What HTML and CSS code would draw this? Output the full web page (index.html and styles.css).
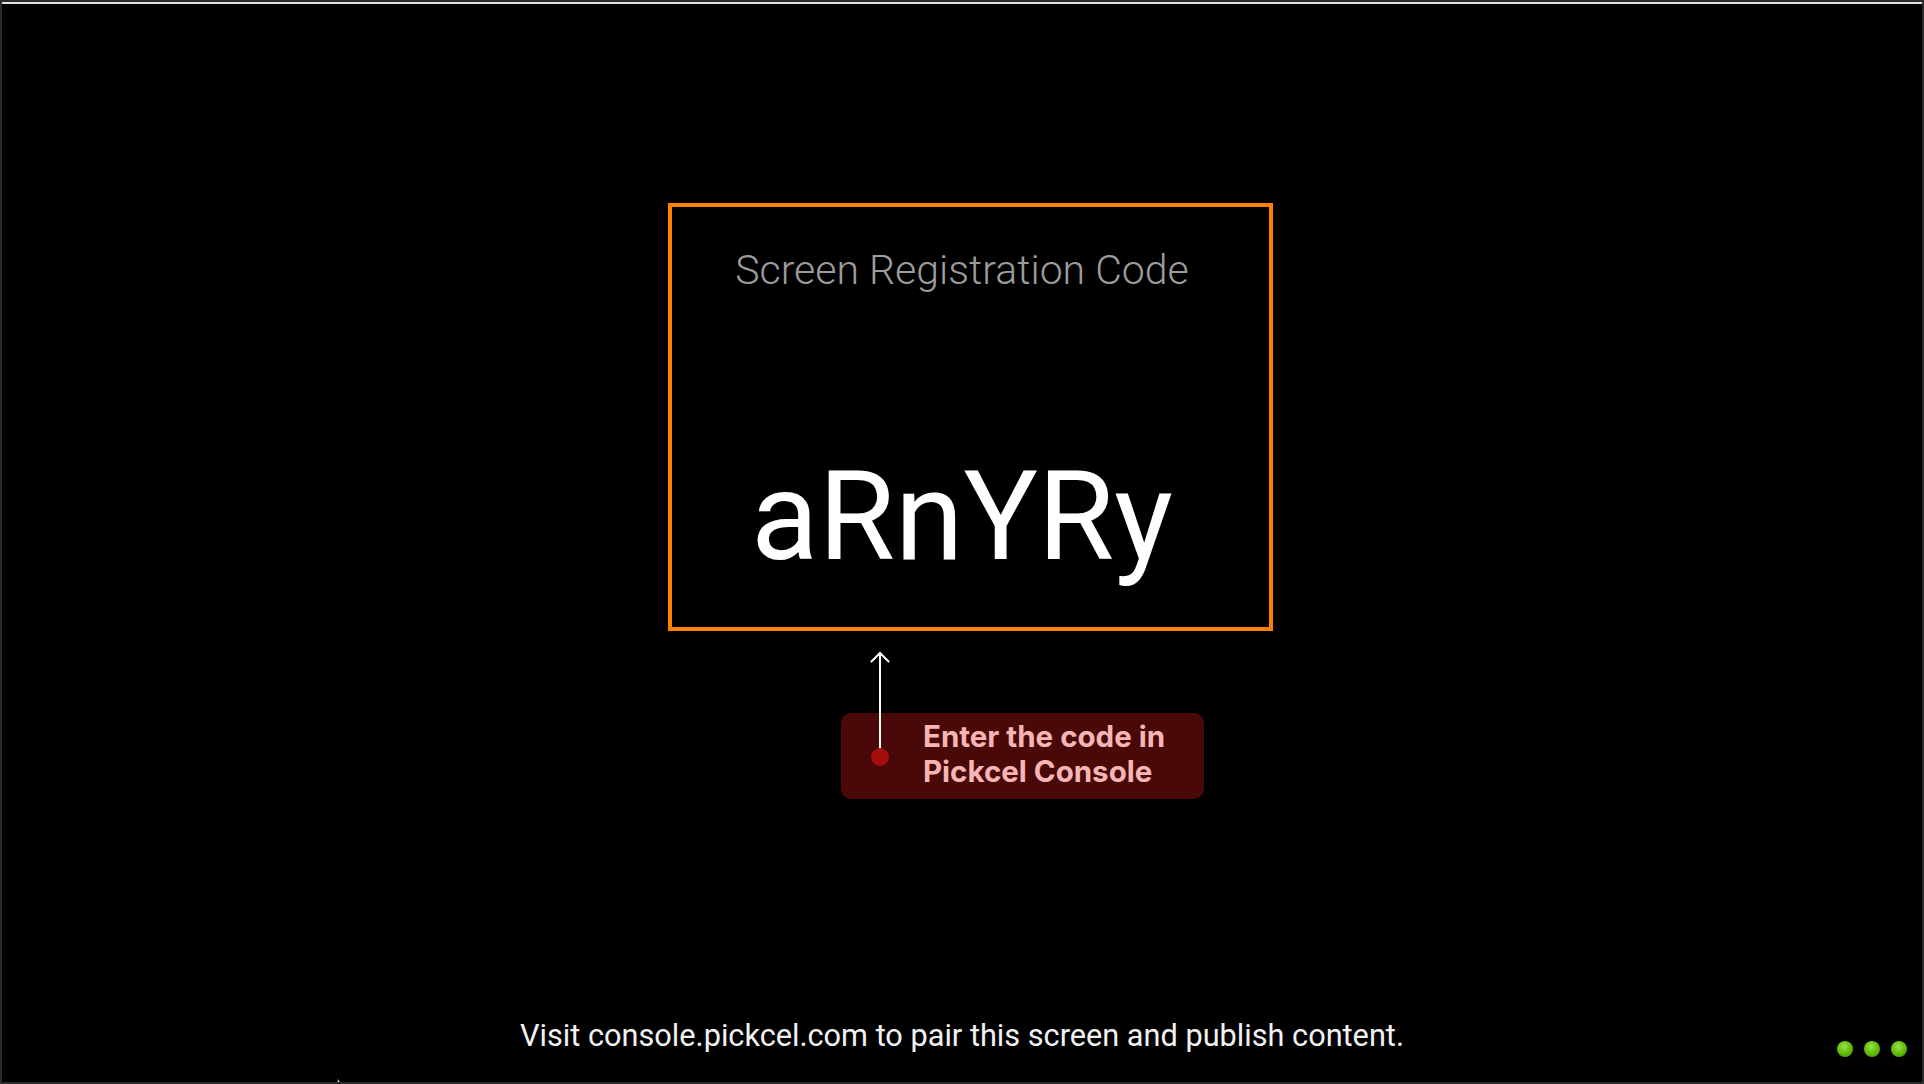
FILE: index.html
```html
<!DOCTYPE html>
<html lang="en">
<head>
<meta charset="utf-8">
<title>Screen Registration</title>
<link rel="stylesheet" href="styles.css">
</head>
<body>
<div class="screen">
  <div class="code-box">
    <div class="code-title">Screen Registration Code</div>
    <div class="code-value">aRnYRy</div>
  </div>
  <div class="hint">
    <svg class="hint-arrow" width="20" height="116" viewBox="0 0 20 116" aria-hidden="true">
      <path d="M10 1 V105" stroke="#ffffff" stroke-width="2" fill="none"/>
      <path d="M1.5 9.5 L10 1 L18.5 9.5" stroke="#ffffff" stroke-width="2" fill="none" stroke-linecap="round" stroke-linejoin="round"/>
      <circle cx="10" cy="105" r="9" fill="#a60e0e"/>
    </svg>
    <div class="hint-text">Enter the code in<br>Pickcel Console</div>
  </div>
  <div class="footer">Visit console.pickcel.com to pair this screen and publish content.</div>
  <div class="status-dots">
    <span class="dot"></span><span class="dot"></span><span class="dot"></span>
  </div>
  <svg class="cursor" width="8" height="8" viewBox="0 0 8 8" aria-hidden="true">
    <path d="M0.5 0.5 L0.5 8 L6 8 Z" fill="#ffffff" stroke="#000" stroke-width="0.6"/>
  </svg>
</div>
</body>
</html>
```

FILE: styles.css
```css
html, body {
  margin: 0;
  padding: 0;
}

body {
  background: #2b2b2b;
  padding: 2px;
  width: 1920px;
  height: 1080px;
}

.screen {
  position: relative;
  box-sizing: border-box;
  width: 1920px;
  height: 1080px;
  background: #000000;
  border-top: 2px solid #e2e2e2;
  display: flex;
  flex-direction: column;
  align-items: center;
  padding-top: 199px;
  overflow: hidden;
  font-family: Roboto, "Liberation Sans", sans-serif;
}

.code-box {
  box-sizing: border-box;
  width: 605px;
  height: 428px;
  margin-left: 17px;
  border: 4px solid #ff8000;
  padding: 41px 17px 0 0;
  display: flex;
  flex-direction: column;
  align-items: center;
}

.code-title {
  font-weight: 300;
  font-size: 41px;
  line-height: 44px;
  color: #9c9c9c;
  white-space: nowrap;
}

.code-value {
  margin-top: 163px;
  font-weight: 400;
  font-size: 124px;
  line-height: 124px;
  color: #ffffff;
  white-space: nowrap;
}

.hint {
  position: relative;
  margin-top: 82px;
  margin-left: 121px;
}

.hint-arrow {
  position: absolute;
  left: 29px;
  top: -61px;
}

.hint-text {
  box-sizing: border-box;
  width: 363px;
  height: 86px;
  padding: 6px 0 10px 82px;
  background: #4a0909;
  border-radius: 10px;
  font-family: Inter, "Liberation Sans", sans-serif;
  font-weight: 700;
  font-size: 29.5px;
  line-height: 35px;
  color: #f8b5b5;
  white-space: nowrap;
}

.footer {
  margin-top: auto;
  margin-bottom: 28px;
  font-size: 30.7px;
  line-height: 36px;
  color: #f2f2f2;
  white-space: nowrap;
}

.status-dots {
  position: absolute;
  right: 15px;
  bottom: 25px;
  display: flex;
  gap: 11px;
}

.dot {
  width: 16px;
  height: 16px;
  border-radius: 50%;
  background: radial-gradient(circle at 45% 35%, #9be34a 0%, #66c10e 45%, #3f8d00 100%);
}

.cursor {
  position: absolute;
  left: 335px;
  bottom: -4px;
}
```
